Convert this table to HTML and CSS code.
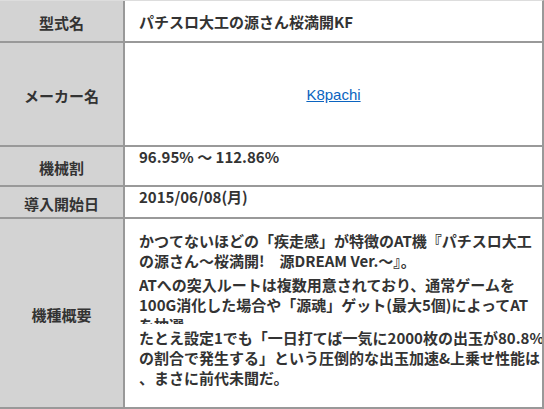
FILE: index.html
```html
<!DOCTYPE html>
<html lang="ja">
<head>
<meta charset="utf-8">
<title>機種情報</title>
<link rel="stylesheet" href="styles.css">
</head>
<body>
<div class="spec">
  <div class="label">型式名</div>
  <div class="value value-mid">パチスロ大工の源さん桜満開KF</div>

  <div class="label">メーカー名</div>
  <div class="value value-center"><a class="maker-link" href="#">K8pachi</a></div>

  <div class="label">機械割</div>
  <div class="value">96.95% ～ 112.86%</div>

  <div class="label">導入開始日</div>
  <div class="value">2015/06/08(月)</div>

  <div class="label">機種概要</div>
  <div class="value value-text">
    <p class="para">かつてないほどの「疾走感」が特徴のAT機『パチスロ大工<br>の源さん～桜満開!　源DREAM Ver.～』。</p>
    <p class="para para-clip">ATへの突入ルートは複数用意されており、通常ゲームを<br>100G消化した場合や「源魂」ゲット(最大5個)によってAT<br>を抽選。</p>
    <p class="para">たとえ設定1でも「一日打てば一気に2000枚の出玉が80.8%<br>の割合で発生する」という圧倒的な出玉加速&amp;上乗せ性能は<br>、まさに前代未聞だ。</p>
  </div>
</div>
</body>
</html>
```

FILE: styles.css
```css
html, body {
  margin: 0;
  padding: 0;
  background: #ffffff;
}

body {
  font-family: "Noto Sans CJK JP", "Noto Sans", sans-serif;
  color: #333333;
}

.spec {
  display: grid;
  grid-template-columns: 123px 1fr;
  grid-template-rows: 40px 102px 38px 30px 188px;
  gap: 2px;
  width: 542px;
  background: #999999;
  border-top: 1px solid #dddddd;
  border-right: 2px solid #999999;
  border-bottom: 2px solid #999999;
}

.label {
  background: #d3d3d3;
  display: flex;
  align-items: center;
  justify-content: center;
  padding-top: 3px;
  font-size: 15px;
  font-weight: bold;
  line-height: 20px;
  box-sizing: border-box;
}

.value {
  background: #ffffff;
  padding-left: 14px;
  font-size: 15px;
  font-weight: bold;
  line-height: 20px;
  white-space: nowrap;
  overflow: hidden;
}

.value-mid {
  display: flex;
  align-items: center;
  padding-top: 2px;
  box-sizing: border-box;
}

.value-center {
  display: flex;
  align-items: center;
  justify-content: center;
  padding-left: 0;
  padding-top: 1px;
  box-sizing: border-box;
}

.maker-link {
  font-family: "Liberation Sans", Arial, sans-serif;
  font-weight: normal;
  font-size: 15px;
  color: #0b64c0;
  text-decoration: underline;
}

.value-text {
  padding-top: 12px;
}

.para {
  margin: 0 0 4px;
}

.para-clip {
  height: 49px;
  overflow: hidden;
}
```
